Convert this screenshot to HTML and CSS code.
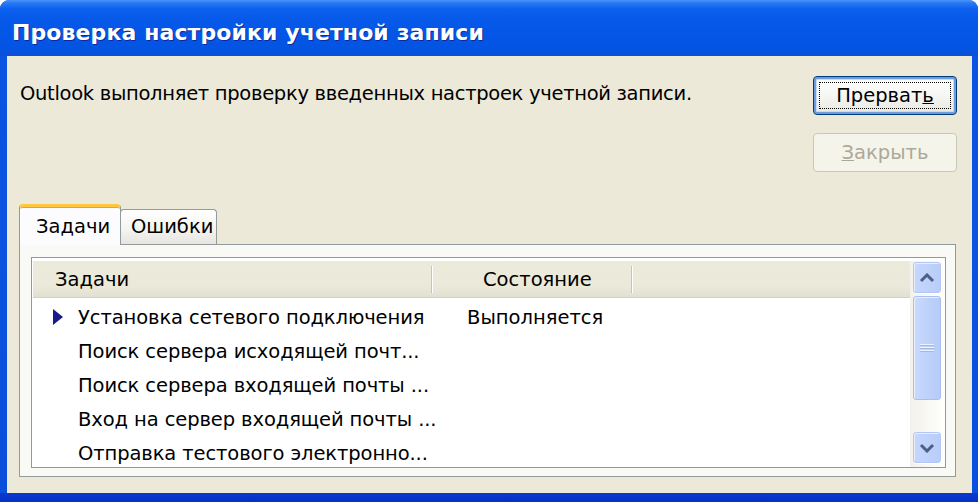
FILE: index.html
```html
<!DOCTYPE html>
<html lang="ru">
<head>
<meta charset="utf-8">
<title>Проверка настройки учетной записи</title>
<link rel="stylesheet" href="styles.css">
</head>
<body>
<div class="window">
  <div class="titlebar"><span class="title">Проверка настройки учетной записи</span></div>
  <div class="client">
    <div class="top">
      <div class="message">Outlook выполняет проверку введенных настроек учетной записи.</div>
      <div class="buttons">
        <button class="btn default"><span class="focus">Прерват<u>ь</u></span></button>
        <button class="btn disabled"><span><u>З</u>акрыть</span></button>
      </div>
    </div>
    <div class="tabs">
      <div class="tab active">Задачи</div>
      <div class="tab">Ошибки</div>
    </div>
    <div class="panel">
      <div class="listview">
        <div class="list">
          <div class="header">
            <div class="hcell c1">Задачи</div>
            <div class="hcell c2">Состояние</div>
            <div class="hcell c3"></div>
          </div>
          <div class="rows">
            <div class="row"><span class="mark"></span><span class="name">Установка сетевого подключения</span><span class="state">Выполняется</span></div>
            <div class="row"><span class="mark none"></span><span class="name">Поиск сервера исходящей почт...</span><span class="state"></span></div>
            <div class="row"><span class="mark none"></span><span class="name">Поиск сервера входящей почты ...</span><span class="state"></span></div>
            <div class="row"><span class="mark none"></span><span class="name">Вход на сервер входящей почты ...</span><span class="state"></span></div>
            <div class="row"><span class="mark none"></span><span class="name">Отправка тестового электронно...</span><span class="state"></span></div>
          </div>
        </div>
        <div class="scrollbar">
          <div class="sbtn"><svg width="16" height="10" viewBox="0 0 16 10"><path d="M2 8 L8 2 L14 8" fill="none" stroke="#4d6185" stroke-width="3"/></svg></div>
          <div class="thumb"><span class="grip"></span></div>
          <div class="spacer"></div>
          <div class="sbtn"><svg width="16" height="10" viewBox="0 0 16 10"><path d="M2 2 L8 8 L14 2" fill="none" stroke="#4d6185" stroke-width="3"/></svg></div>
        </div>
      </div>
    </div>
  </div>
</div>
</body>
</html>
```
FILE: styles.css
```css
* { box-sizing: border-box; }
html, body { margin: 0; padding: 0; }
body {
  width: 978px;
  height: 502px;
  background: #ffffff;
  font-family: "DejaVu Sans", "Liberation Sans", sans-serif;
  overflow: hidden;
}
.window {
  width: 978px;
  height: 502px;
  display: flex;
  flex-direction: column;
  border-radius: 9px 9px 0 0;
  overflow: hidden;
  background: linear-gradient(to bottom, #0a55e2 0, #0a4fdc calc(100% - 9px), #0a38cf calc(100% - 9px), #0730c4 100%);
}
.titlebar {
  height: 56px;
  flex: none;
  display: flex;
  align-items: center;
  padding: 8px 0 0 12px;
  background: linear-gradient(to bottom, #4895fa 0, #2a78f6 3px, #0c60ee 9px, #0558e8 40%, #0454e4 85%, #0a4fd8 100%);
}
.title {
  color: #ffffff;
  font-weight: bold;
  font-size: 22px;
  letter-spacing: 0.1px;
  text-shadow: 1px 1px 0 #0b2a9e;
}
.client {
  flex: 1;
  margin: 0 6px 9px 7px;
  background: #ece9d8;
  padding: 0 16px 0 12px;
  display: flex;
  flex-direction: column;
}
.top {
  display: flex;
  justify-content: space-between;
  height: 149px;
}
.message {
  padding: 26px 0 0 1px;
  font-size: 19.5px;
  letter-spacing: -0.3px;
  color: #000;
  line-height: 24px;
}
.buttons {
  display: flex;
  flex-direction: column;
  gap: 18px;
  padding-top: 20px;
  margin-right: -1px;
}
.btn {
  width: 144px;
  height: 39px;
  border-radius: 4px;
  font-family: inherit;
  font-size: 19.5px;
  padding: 0;
  display: flex;
  align-items: center;
  justify-content: center;
}
.btn.default {
  border: 1px solid #003c74;
  background: linear-gradient(to bottom, #ffffff 0, #f6f6f3 50%, #e8e7e0 100%);
  box-shadow: inset 0 0 0 2px #6d9ae3, inset 0 0 0 3px #c9dbf7;
  color: #000;
}
.btn.default .focus {
  display: flex;
  align-items: center;
  justify-content: center;
  width: 132px;
  height: 27px;
  border: 1px dotted #000;
}
.btn.disabled {
  border: 1px solid #c9c7ba;
  background: #f5f4ea;
  color: #aca899;
}
.tabs {
  display: flex;
  align-items: flex-end;
  height: 39px;
  position: relative;
  z-index: 1;
}
.tab {
  height: 35px;
  padding: 0 5px 0 10px;
  font-size: 19.5px;
  line-height: 34px;
  border: 1px solid #919b9c;
  border-bottom: none;
  border-radius: 4px 4px 0 0;
  background: linear-gradient(to bottom, #ffffff 0, #f3f3ef 60%, #e6e5de 100%);
  color: #000;
}
.tab.active {
  height: 41px;
  margin-bottom: -1px;
  width: 102px;
  padding: 4px 0 0 16px;
  background: #fcfcfe;
  border-top: 3px solid #ffc73c;
  box-shadow: inset 0 1px 0 #e6a23a;
  line-height: 32px;
}
.tab:not(.active) { width: 97px; margin-left: -1px; padding-left: 10px; }
.panel {
  height: 233px;
  border: 1px solid #919b9c;
  background: #f9f9f6;
  padding: 12px 9px 7px 11px;
}
.listview {
  height: 211px;
  border: 1px solid #7f9db9;
  background: #ffffff;
  padding: 3px 2px 0 1px;
  display: grid;
  grid-template-columns: 1fr 33px;
}
.list {
  overflow: hidden;
  height: 206px;
}
.header {
  height: 37px;
  display: flex;
  background: linear-gradient(to bottom, #ebeadb 0, #ebe9da 70%, #e2e0d0 100%);
  border-bottom: 1px solid #d6d2c2;
  align-items: center;
}
.hcell {
  font-size: 19.5px;
  height: 27px;
  line-height: 27px;
  color: #000;
}
.hcell.c1 { width: 399px; padding-left: 22px; border-right: 1px solid #c7c5b2; box-shadow: 1px 0 0 #ffffff; }
.hcell.c2 { width: 200px; padding-left: 51px; border-right: 1px solid #c7c5b2; box-shadow: 1px 0 0 #ffffff; }
.hcell.c3 { flex: 1; }
.rows { padding-top: 2px; }
.row {
  height: 34px;
  display: flex;
  align-items: center;
  font-size: 19.5px;
  color: #000;
}
.mark {
  width: 45px;
  padding-left: 20px;
  display: flex;
}
.mark::before {
  content: "";
  width: 0;
  height: 0;
  border-top: 8px solid transparent;
  border-bottom: 8px solid transparent;
  border-left: 10px solid #1a1a8c;
}
.mark.none::before { border-left-color: transparent; }
.name { width: 389px; letter-spacing: -0.1px; }
.state { flex: 1; }
.scrollbar {
  display: flex;
  flex-direction: column;
  padding: 1px 2px 4px 3px;
  background: linear-gradient(to right, #f3f1ec, #fefefb);
}
.sbtn {
  height: 31px;
  border: 1px solid #b4c8f6;
  border-radius: 3px;
  background: linear-gradient(to right, #c6d7fc, #b8cdf8);
  box-shadow: inset 1px 1px 0 #e6eefc, 1px 1px 0 #ffffff;
  display: flex;
  align-items: center;
  justify-content: center;
}
.thumb {
  margin-top: 3px;
  height: 104px;
  border: 1px solid #a8bff0;
  border-radius: 3px;
  background: linear-gradient(to right, #c9dafd, #bcd0fa 60%, #b6cbf7);
  box-shadow: inset 1px 1px 0 #e8f0fe;
  display: flex;
  align-items: center;
  justify-content: center;
}
.grip {
  width: 14px;
  height: 9px;
  background: repeating-linear-gradient(to bottom, #eef4ff 0, #eef4ff 1px, #9fb8ea 1px, #9fb8ea 2px, transparent 2px, transparent 3px);
}
.spacer { flex: 1; }
```
